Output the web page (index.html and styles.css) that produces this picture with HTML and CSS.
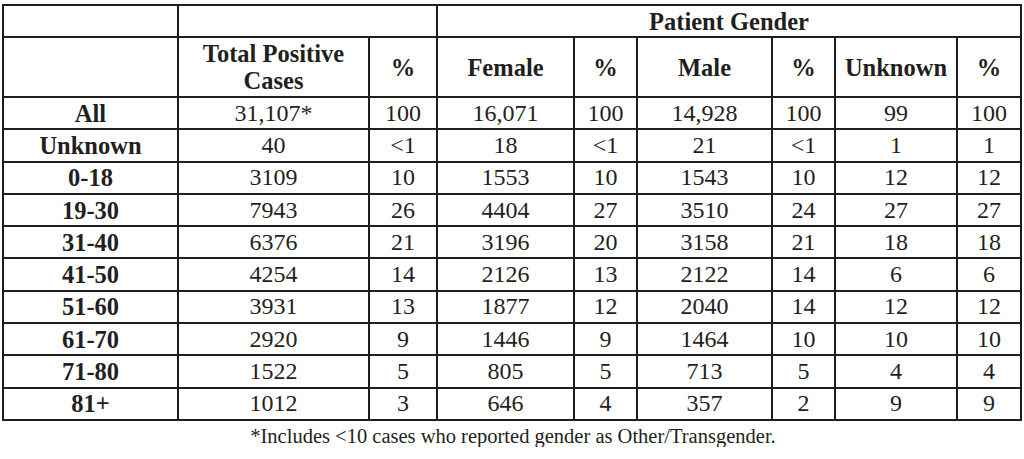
FILE: index.html
```html
<!DOCTYPE html>
<html>
<head>
<meta charset="utf-8">
<link rel="stylesheet" href="styles.css">
</head>
<body>
<div class="page">
<table class="cases">
<colgroup>
<col class="c-label"><col class="c-total"><col class="c-pct1"><col class="c-female"><col class="c-pct"><col class="c-male"><col class="c-pct"><col class="c-unk"><col class="c-pct">
</colgroup>
<thead>
<tr class="h1"><th></th><th colspan="2"></th><th colspan="6">Patient Gender</th></tr>
<tr class="h2"><th></th><th>Total Positive<br>Cases</th><th>%</th><th>Female</th><th>%</th><th>Male</th><th>%</th><th>Unknown</th><th>%</th></tr>
</thead>
<tbody>
<tr><th>All</th><td>31,107*</td><td>100</td><td>16,071</td><td>100</td><td>14,928</td><td>100</td><td>99</td><td>100</td></tr>
<tr><th>Unknown</th><td>40</td><td>&lt;1</td><td>18</td><td>&lt;1</td><td>21</td><td>&lt;1</td><td>1</td><td>1</td></tr>
<tr><th>0-18</th><td>3109</td><td>10</td><td>1553</td><td>10</td><td>1543</td><td>10</td><td>12</td><td>12</td></tr>
<tr><th>19-30</th><td>7943</td><td>26</td><td>4404</td><td>27</td><td>3510</td><td>24</td><td>27</td><td>27</td></tr>
<tr><th>31-40</th><td>6376</td><td>21</td><td>3196</td><td>20</td><td>3158</td><td>21</td><td>18</td><td>18</td></tr>
<tr><th>41-50</th><td>4254</td><td>14</td><td>2126</td><td>13</td><td>2122</td><td>14</td><td>6</td><td>6</td></tr>
<tr><th>51-60</th><td>3931</td><td>13</td><td>1877</td><td>12</td><td>2040</td><td>14</td><td>12</td><td>12</td></tr>
<tr><th>61-70</th><td>2920</td><td>9</td><td>1446</td><td>9</td><td>1464</td><td>10</td><td>10</td><td>10</td></tr>
<tr><th>71-80</th><td>1522</td><td>5</td><td>805</td><td>5</td><td>713</td><td>5</td><td>4</td><td>4</td></tr>
<tr><th>81+</th><td>1012</td><td>3</td><td>646</td><td>4</td><td>357</td><td>2</td><td>9</td><td>9</td></tr>
</tbody>
</table>
<p class="note">*Includes &lt;10 cases who reported gender as Other/Transgender.</p>
</div>
</body>
</html>
```

FILE: styles.css
```css
html, body {
  margin: 0;
  padding: 0;
  background: #ffffff;
}

.page {
  padding: 4px 0 0 2px;
  font-family: "Liberation Serif", "Times New Roman", serif;
  color: #231f20;
}

.cases {
  border-collapse: collapse;
  table-layout: fixed;
  width: 1020px;
}

.cases th,
.cases td {
  border: 2px solid #1f1d1e;
  padding: 0;
  text-align: center;
  vertical-align: middle;
  font-family: "Liberation Serif", "Times New Roman", serif;
  font-size: 24px;
  line-height: 27px;
  white-space: nowrap;
}

.cases th {
  font-weight: bold;
  font-size: 24.5px;
}

.cases td {
  font-weight: normal;
}

.c-label { width: 175px; }
.c-total { width: 191px; }
.c-pct1 { width: 68px; }
.c-female { width: 137px; }
.c-pct { width: 63px; }
.c-male { width: 135px; }
.c-unk { width: 122px; }
.cases col:last-child { width: 64px; }

.h1 { height: 32px; }
.h2 { height: 60px; }
.cases tbody tr { height: 32.3px; }

.note {
  margin: 4px 0 0;
  text-align: center;
  font-family: "Liberation Serif", "Times New Roman", serif;
  font-size: 20.5px;
  line-height: 22px;
}
```
